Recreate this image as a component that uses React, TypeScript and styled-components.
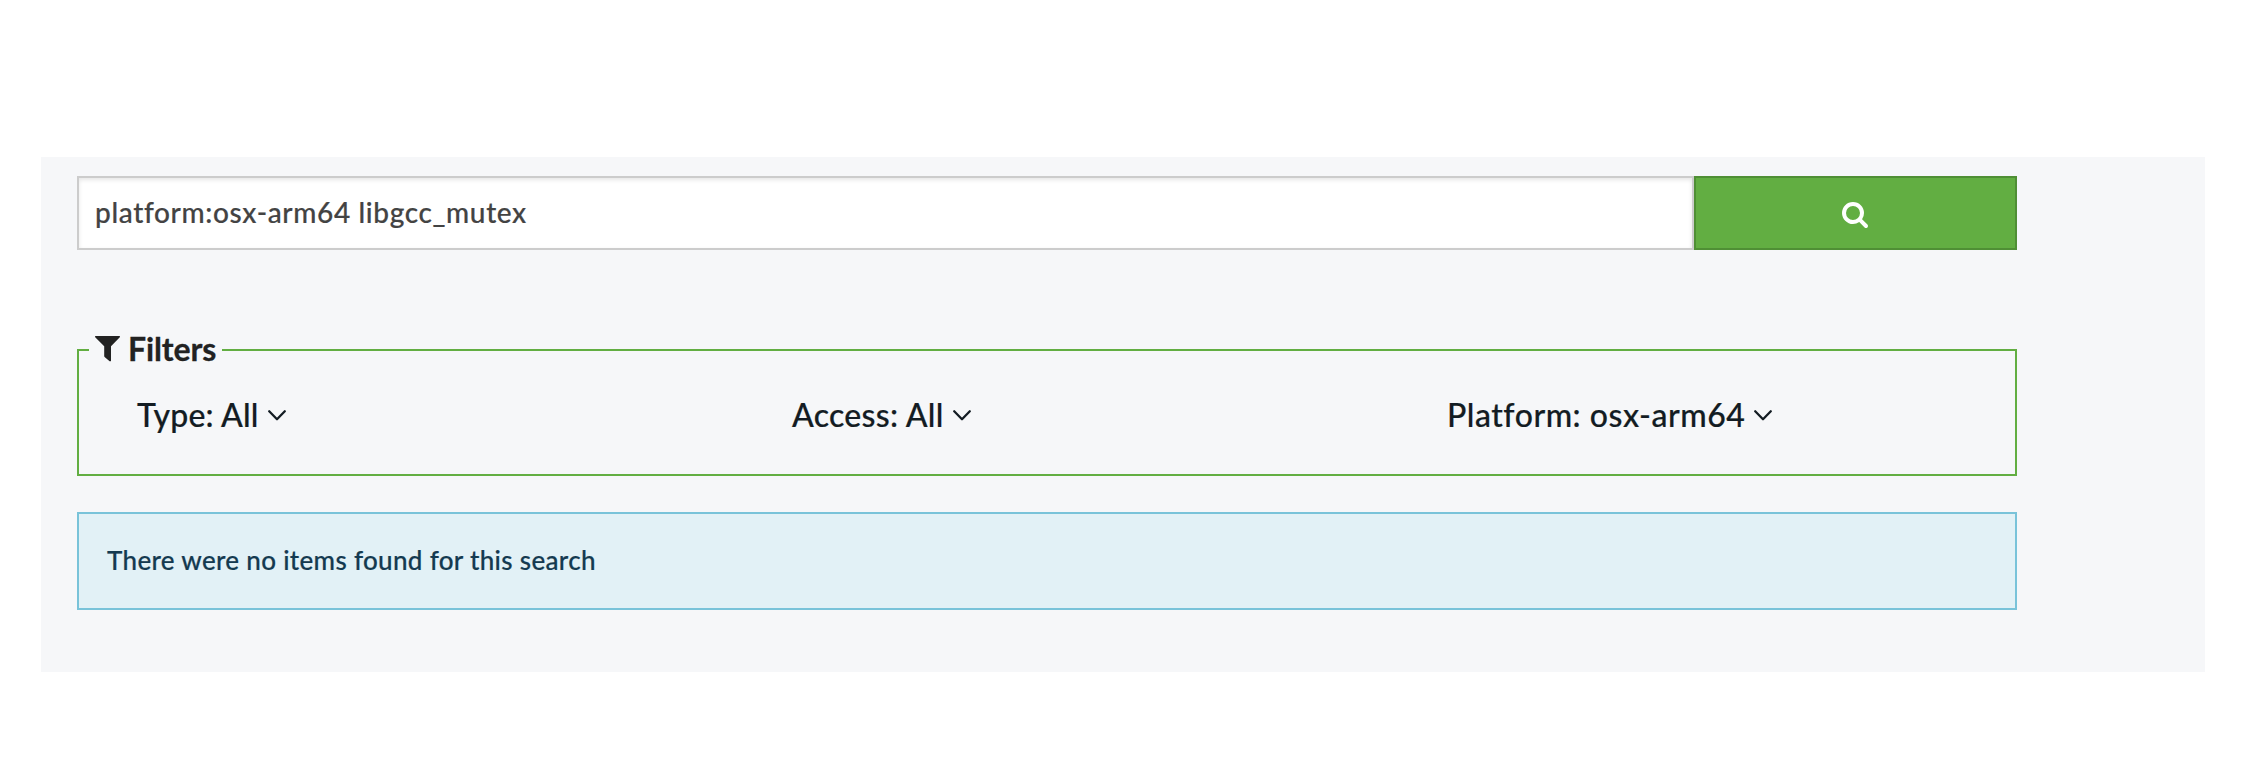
import React from "react";
import styled, { createGlobalStyle } from "styled-components";

const GlobalStyle = createGlobalStyle`
  * { box-sizing: border-box; }
  body {
    margin: 0;
    background: #fff;
    font-family: Lato, "Open Sans", sans-serif;
    font-weight: 500;
  }
`;

const Page = styled.main`
  height: 772px;
  padding: 157px 57px 100px 41px;
`;

const Panel = styled.section`
  display: flex;
  flex-direction: column;
  height: 515px;
  padding: 19px 188px 0 36px;
  background: #f6f7f9;
`;

const SearchForm = styled.form`
  display: flex;
  height: 74px;
  margin: 0;
`;

const SearchInput = styled.input`
  flex: 1;
  min-width: 0;
  padding: 0 16px 3px;
  border: 2px solid #ccc;
  border-radius: 0;
  outline: none;
  background: #fff;
  box-shadow: inset 0 2px 4px rgba(0, 0, 0, 0.1);
  color: #434343;
  font: inherit;
  font-size: 28px;
  letter-spacing: 0.64px;
  -webkit-text-stroke: 0.2px currentColor;
`;

const SearchButton = styled.button`
  display: flex;
  align-items: center;
  justify-content: center;
  width: 323px;
  padding: 3px 1px 0 0;
  border: 2px solid #4f8f35;
  background: #62ae42;
  color: #fff;
`;

const FilterBox = styled.section`
  height: 127px;
  margin-top: 99px;
  border: 2px solid #62ae42;
`;

const Legend = styled.h2`
  display: flex;
  align-items: center;
  gap: 8px;
  width: 133px;
  height: 40px;
  margin: -22px 0 0 10px;
  padding-left: 6px;
  background: #f6f7f9;
  color: #222;
  font-size: 32px;
  font-weight: 700;
  line-height: 40px;
  letter-spacing: -0.1px;
  -webkit-text-stroke: 0.3px currentColor;
`;

const FilterRow = styled.div`
  display: grid;
  grid-template-columns: repeat(3, 655px);
  padding: 26px 0 0 58px;
`;

const FilterToggle = styled.button<{ $tracking: number }>`
  display: flex;
  align-items: center;
  justify-self: start;
  gap: 8px;
  height: 40px;
  padding: 0;
  border: 0;
  background: none;
  color: #131c23;
  font: inherit;
  font-size: 32px;
  line-height: 40px;
  letter-spacing: ${(p) => p.$tracking}px;
  white-space: nowrap;
  -webkit-text-stroke: 0.2px currentColor;
`;

const Notice = styled.div`
  display: flex;
  align-items: center;
  height: 98px;
  margin-top: 36px;
  padding: 0 28px 2px;
  border: 2px solid #79c3d9;
  background: #e2f1f6;
  color: #143a50;
  font-size: 26px;
  letter-spacing: 0.32px;
  -webkit-text-stroke: 0.2px currentColor;
`;

const SearchIcon = () => (
  <svg width="26" height="26" viewBox="64 128 1664 1664" fill="currentColor">
    <path d="M1216 832q0-185-131.5-316.5t-316.5-131.5-316.5 131.5-131.5 316.5 131.5 316.5 316.5 131.5 316.5-131.5 131.5-316.5zm512 832q0 52-38 90t-90 38q-54 0-90-38l-343-342q-179 124-399 124-143 0-273.5-55.5t-225-150-150-225-55.5-273.5 55.5-273.5 150-225 225-150 273.5-55.5 273.5 55.5 225 150 150 225 55.5 273.5q0 220-124 399l343 343q37 37 37 90z" />
  </svg>
);

const FilterIcon = () => (
  <svg width="25" height="26" viewBox="0 0 25 26" fill="currentColor">
    <path d="M0.5 0h24q0.8 0.2 0.3 1.2L16 10.3V25q-0.5 0.6-1.4 0.2L9.6 21q-0.4-0.3-0.4-0.9V10.3L0.2 1.2Q-0.3 0.2 0.5 0z" />
  </svg>
);

const ChevronIcon = () => (
  <svg width="20" height="13" viewBox="0 0 20 13" fill="none" stroke="currentColor" strokeWidth="2.3" strokeLinecap="round" strokeLinejoin="round">
    <path d="M2.2 2.2l7.8 8 7.8-8" />
  </svg>
);

const filters = [
  { label: "Type: All", tracking: 0.2 },
  { label: "Access: All", tracking: 0.3 },
  { label: "Platform: osx-arm64", tracking: 0.52 },
];

export default function App() {
  return (
    <Page>
      <GlobalStyle />
      <Panel>
        <SearchForm onSubmit={(e) => e.preventDefault()}>
          <SearchInput defaultValue="platform:osx-arm64 libgcc_mutex" spellCheck={false} aria-label="Search" />
          <SearchButton aria-label="Search">
            <SearchIcon />
          </SearchButton>
        </SearchForm>
        <FilterBox>
          <Legend>
            <FilterIcon />
            Filters
          </Legend>
          <FilterRow>
            {filters.map((f) => (
              <FilterToggle key={f.label} $tracking={f.tracking}>
                {f.label}
                <ChevronIcon />
              </FilterToggle>
            ))}
          </FilterRow>
        </FilterBox>
        <Notice>There were no items found for this search</Notice>
      </Panel>
    </Page>
  );
}
